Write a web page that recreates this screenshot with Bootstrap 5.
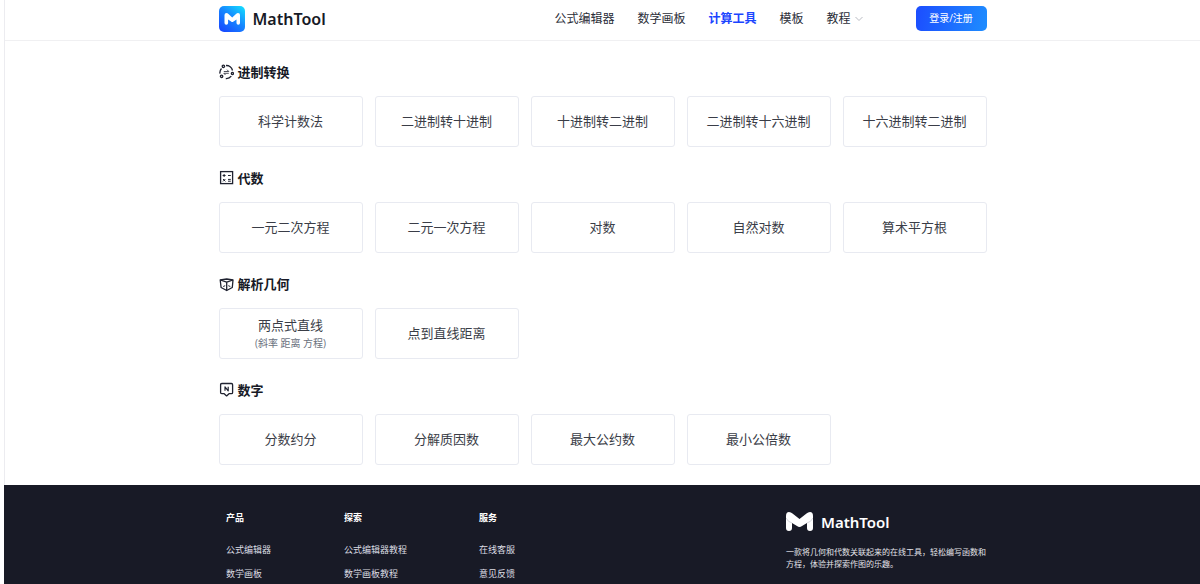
<!DOCTYPE html>
<html lang="zh-CN">
<head>
<meta charset="utf-8">
<meta name="viewport" content="width=device-width, initial-scale=1">
<title>MathTool</title>
<link href="https://cdn.jsdelivr.net/npm/bootstrap@5.3.0/dist/css/bootstrap.min.css" rel="stylesheet">
<style>
  body { font-family: "Open Sans", "Noto Sans CJK SC", sans-serif; font-size: 13px; color: #171a26; padding-left: 4px; background: #fff; }
  .page-shell { border-left: 1px solid #ececf0; }
  .wrap { width: 100%; max-width: 768px; margin-left: auto; margin-right: auto; }
  .site-head { border-bottom: 1px solid #f0f0f2; }
  .head-row { min-height: 40px; padding-bottom: 3px; }
  .brand-name { font-family: "Noto Sans", "Open Sans", sans-serif; font-size: 16px; line-height: 24px; font-weight: 600; }
  .brand-light { font-size: 15px; line-height: 18px; color: #fff; }
  .main-nav { column-gap: 23px; font-size: 12px; line-height: 20px; }
  .main-nav .nav-link { color: #2b2e38; padding: 0; }
  .main-nav .nav-link.active { color: #1b45ff; font-weight: 700; }
  .btn-login { width: 71px; height: 25px; padding: 0; border: 0; border-radius: 5px; font-size: 10px; line-height: 25px; color: #fff; background: linear-gradient(100deg, #1c4dff, #1e8dff); margin-left: 53px; }
  .btn-login:hover { color: #fff; }
  .tool-main { padding-top: 21px; }
  .tool-group { margin-bottom: 21px; }
  .tool-group:last-child { margin-bottom: 20px; }
  .group-title { font-size: 13px; line-height: 20px; font-weight: 700; margin-bottom: 14px; }
  .tool-grid { display: grid; grid-template-columns: repeat(5, 1fr); gap: 12px; }
  .tool-card { min-height: 51px; padding-bottom: 2px; border: 1px solid #e8eaf1; border-radius: 3px; color: #3a3d47; line-height: 18px; text-decoration: none; }
  .tool-card.flex-column { padding-bottom: 0; }
  .tool-card small { font-size: 10px; color: #6b7280; }
  .site-foot { background: #181a26; color: #e2e3e8; font-size: 9px; line-height: 12px; margin-left: -1px; }
  .foot-grid { display: grid; grid-template-columns: 118fr 135fr 307fr 200fr; padding: 27px 0 4px 8px; }
  .foot-grid h3 { font-size: 9px; line-height: 12px; font-weight: 700; color: #fff; margin-bottom: 20px; }
  .foot-grid li { margin-bottom: 12px; }
  .foot-grid a { color: #dcdde3; text-decoration: none; }
  .about { font-size: 8px; margin: 15px 0 0; }
  @media (max-width: 800px) {
    .wrap { padding-left: 12px; padding-right: 12px; }
    .head-row { flex-wrap: wrap; }
    .tool-grid { grid-template-columns: repeat(2, 1fr); }
    .foot-grid { grid-template-columns: repeat(2, 1fr); }
  }
</style>
</head>
<body>
<div class="page-shell min-vh-100 d-flex flex-column">
  <header class="site-head">
    <div class="wrap head-row d-flex align-items-center">
      <a href="#" class="d-flex align-items-center gap-2 text-reset text-decoration-none me-auto">
        <svg width="26" height="26" viewBox="0 0 26 26" aria-hidden="true">
          <defs><linearGradient id="logo-bg" x1="1" y1="0" x2="0.2" y2="1"><stop offset="0" stop-color="#14e4ff"/><stop offset=".5" stop-color="#1688ff"/><stop offset="1" stop-color="#174bff"/></linearGradient></defs>
          <rect width="26" height="26" rx="5" fill="url(#logo-bg)"/>
          <path d="M5.500 9q0-2 2-2 1 0 2 1l3.700 3.500L17 8q1-1 2-1 2 0 2 2v8q0 1.700-1.700 1.700T17.500 17v-3.500l-3 2q-1.200 1-2.400 0l-3-2V17q0 1.700-1.800 1.700T5.500 17z" fill="#fff"/>
        </svg>
        <span class="brand-name">MathTool</span>
      </a>
      <nav class="main-nav d-flex align-items-center" aria-label="主导航">
        <a class="nav-link" href="#">公式编辑器</a>
        <a class="nav-link" href="#">数学画板</a>
        <a class="nav-link active" aria-current="page" href="#">计算工具</a>
        <a class="nav-link" href="#">模板</a>
        <a class="nav-link d-flex align-items-center gap-1" href="#">教程
          <svg width="8" height="6" viewBox="0 0 8 6" fill="none" stroke="#b9bbc2" aria-hidden="true"><path d="M.5 1L4 4.500 7.500 1"/></svg>
        </a>
      </nav>
      <button type="button" class="btn btn-login">登录/注册</button>
    </div>
  </header>

  <main class="wrap tool-main">
    <section class="tool-group">
      <h2 class="group-title d-flex align-items-center gap-1">
        <svg width="15" height="16" viewBox="0 0 15 16" fill="none" stroke="#1f2230" stroke-width="1.3" aria-hidden="true">
          <path d="M7 1.500a6.300 6.300 0 0 1 6.500 5M12.300 12.200a6.300 6.300 0 0 1-5.500 2.300M1 9.700a6.300 6.300 0 0 1 1.500-5.200"/>
          <circle cx="4.400" cy="2.300" r="1.200"/><circle cx="13.400" cy="9.500" r="1.100"/><circle cx="2.600" cy="12.300" r="1.200"/>
          <path d="M4.800 7.500h5L8 5.700M9.800 9.300h-5l1.700 1.700" stroke-width=".8"/>
        </svg>进制转换</h2>
      <div class="tool-grid">
        <a href="#" class="tool-card d-flex align-items-center justify-content-center">科学计数法</a>
        <a href="#" class="tool-card d-flex align-items-center justify-content-center">二进制转十进制</a>
        <a href="#" class="tool-card d-flex align-items-center justify-content-center">十进制转二进制</a>
        <a href="#" class="tool-card d-flex align-items-center justify-content-center">二进制转十六进制</a>
        <a href="#" class="tool-card d-flex align-items-center justify-content-center">十六进制转二进制</a>
      </div>
    </section>
    <section class="tool-group">
      <h2 class="group-title d-flex align-items-center gap-1">
        <svg width="15" height="16" viewBox="0 0 15 16" fill="none" stroke="#1f2230" aria-hidden="true">
          <rect x="1.600" y="1.600" width="12" height="12" stroke-width="1.3"/>
          <path d="M3.600 5.500h3M5.100 4v3M9 5.500h2.800M4 9l2.400 2.400M6.400 9L4 11.400M9 9.400h2.800M9 11.200h2.800"/>
        </svg>代数</h2>
      <div class="tool-grid">
        <a href="#" class="tool-card d-flex align-items-center justify-content-center">一元二次方程</a>
        <a href="#" class="tool-card d-flex align-items-center justify-content-center">二元一次方程</a>
        <a href="#" class="tool-card d-flex align-items-center justify-content-center">对数</a>
        <a href="#" class="tool-card d-flex align-items-center justify-content-center">自然对数</a>
        <a href="#" class="tool-card d-flex align-items-center justify-content-center">算术平方根</a>
      </div>
    </section>
    <section class="tool-group">
      <h2 class="group-title d-flex align-items-center gap-1">
        <svg width="15" height="16" viewBox="0 0 15 16" fill="none" stroke="#1f2230" stroke-width="1.3" stroke-linejoin="round" aria-hidden="true">
          <path d="M1.200 4l6.500-1L14 4l-.7 7.500-5.600 3-5.600-3z"/>
          <path d="M1.200 4l6.500 2.200L14 4M7.700 6.200v8.300"/><path d="M4.200 10.500l2-.8M9.300 9.700l2 .8" stroke-width="1"/>
        </svg>解析几何</h2>
      <div class="tool-grid">
        <a href="#" class="tool-card d-flex flex-column align-items-center justify-content-center"><span>两点式直线</span><small>(斜率 距离 方程)</small></a>
        <a href="#" class="tool-card d-flex align-items-center justify-content-center">点到直线距离</a>
      </div>
    </section>
    <section class="tool-group">
      <h2 class="group-title d-flex align-items-center gap-1">
        <svg width="15" height="16" viewBox="0 0 15 16" fill="none" stroke="#1f2230" stroke-width="1.3" stroke-linejoin="round" aria-hidden="true">
          <path d="M2.800 1.500h9.600q1.200 0 1.200 1.200v7.800q0 1.200-1.200 1.200H10l-2.400 2.200-2.400-2.200H2.800q-1.200 0-1.200-1.200V2.700q0-1.200 1.200-1.200z"/>
          <path d="M6 8.800V4.800L9.200 8.800V4.800" stroke-width="1.2"/>
        </svg>数字</h2>
      <div class="tool-grid">
        <a href="#" class="tool-card d-flex align-items-center justify-content-center">分数约分</a>
        <a href="#" class="tool-card d-flex align-items-center justify-content-center">分解质因数</a>
        <a href="#" class="tool-card d-flex align-items-center justify-content-center">最大公约数</a>
        <a href="#" class="tool-card d-flex align-items-center justify-content-center">最小公倍数</a>
      </div>
    </section>
  </main>

  <footer class="site-foot flex-grow-1">
    <div class="wrap foot-grid">
      <div>
        <h3>产品</h3>
        <ul class="list-unstyled mb-0"><li><a href="#">公式编辑器</a></li><li class="mb-0"><a href="#">数学画板</a></li></ul>
      </div>
      <div>
        <h3>探索</h3>
        <ul class="list-unstyled mb-0"><li><a href="#">公式编辑器教程</a></li><li class="mb-0"><a href="#">数学画板教程</a></li></ul>
      </div>
      <div>
        <h3>服务</h3>
        <ul class="list-unstyled mb-0"><li><a href="#">在线客服</a></li><li class="mb-0"><a href="#">意见反馈</a></li></ul>
      </div>
      <div>
        <div class="d-flex align-items-center gap-2">
          <svg width="27" height="19" viewBox="0 0 27 19" aria-hidden="true">
            <path d="M0 4q0-4 3-4 2 0 3.500 1.500L13.500 7l7-5.500Q22 0 24 0q3 0 3 4v12q0 3-3 3t-3-3v-5l-5 3q-2.500 2-5 0l-5-3v5q0 3-3 3t-3-3z" fill="#fff"/>
            <path d="M0 6q2 4 6 5M27 6q-2 4-6 5" fill="none" stroke="#d5d6dc"/>
          </svg>
          <span class="brand-name brand-light">MathTool</span>
        </div>
        <p class="about">一款将几何和代数关联起来的在线工具，轻松编写函数和方程，体验并探索作图的乐趣。</p>
      </div>
    </div>
  </footer>
</div>
<script src="https://cdn.jsdelivr.net/npm/bootstrap@5.3.0/dist/js/bootstrap.bundle.min.js"></script>
</body>
</html>
